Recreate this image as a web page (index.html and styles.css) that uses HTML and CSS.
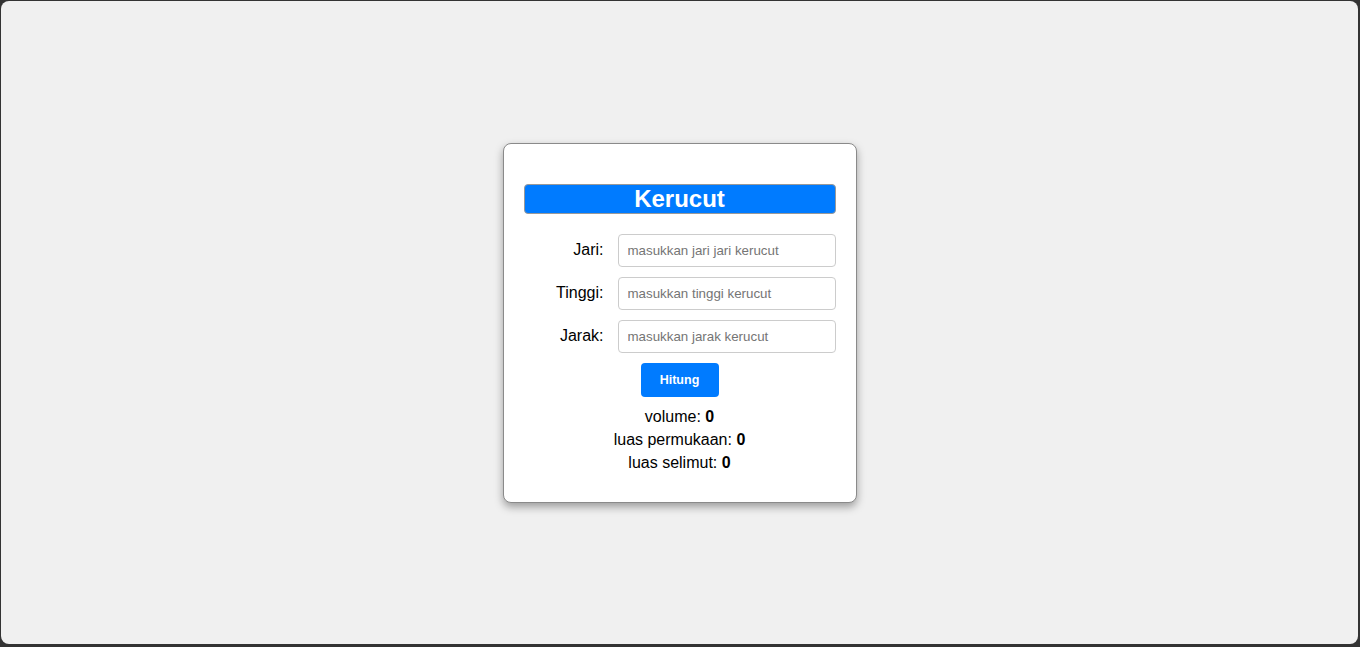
FILE: index.html
```html
<!DOCTYPE html>
<html lang="id">
<head>
<meta charset="utf-8">
<title>Kerucut</title>
<link rel="stylesheet" href="styles.css">
</head>
<body>
<div class="frame">
  <div class="card">
    <h2 class="title">Kerucut</h2>
    <div class="row">
      <label class="label" for="jari">Jari:</label>
      <input class="field" id="jari" type="text" placeholder="masukkan jari jari kerucut">
    </div>
    <div class="row">
      <label class="label" for="tinggi">Tinggi:</label>
      <input class="field" id="tinggi" type="text" placeholder="masukkan tinggi kerucut">
    </div>
    <div class="row">
      <label class="label" for="jarak">Jarak:</label>
      <input class="field" id="jarak" type="text" placeholder="masukkan jarak kerucut">
    </div>
    <div class="actions">
      <button class="btn" type="button">Hitung</button>
    </div>
    <div class="results">
      <p class="result">volume: <b>0</b></p>
      <p class="result">luas permukaan: <b>0</b></p>
      <p class="result">luas selimut: <b>0</b></p>
    </div>
  </div>
</div>
</body>
</html>
```
FILE: styles.css
```css
html, body {
  margin: 0;
  padding: 0;
  height: 100%;
}
body {
  background: #333333;
  font-family: "Liberation Sans", Arial, sans-serif;
}
.frame {
  box-sizing: border-box;
  height: calc(100% - 4px);
  margin: 1px 2px 3px 1px;
  background: #f0f0f0;
  border-radius: 8px;
  display: flex;
  align-items: center;
  justify-content: center;
}
.card {
  width: 312px;
  padding: 20px;
  background: #ffffff;
  border: 1px solid #8a8a8a;
  border-radius: 8px;
  box-shadow: 0 4px 8px rgba(0, 0, 0, 0.35);
}
.title {
  margin: 20px 0 20px;
  font-size: 24px;
  font-weight: bold;
  line-height: 28px;
  color: #ffffff;
  text-align: center;
  background: #007bff;
  border: 1px solid #999999;
  border-radius: 4px;
}
.row {
  display: grid;
  grid-template-columns: 80px 1fr;
  column-gap: 14px;
  align-items: center;
  margin-bottom: 10px;
}
.label {
  text-align: right;
  font-size: 16px;
  color: #000000;
}
.field {
  box-sizing: border-box;
  width: 100%;
  height: 33px;
  padding: 8px 8px 8px 9px;
  font-family: "Liberation Sans", Arial, sans-serif;
  font-size: 13.333px;
  border: 1px solid #cccccc;
  border-radius: 4px;
  background: #ffffff;
}
.field::placeholder {
  color: #757575;
}
.actions {
  display: flex;
  justify-content: center;
}
.btn {
  height: 34px;
  width: 78px;
  padding: 0;
  font-family: "Liberation Sans", Arial, sans-serif;
  font-size: 12.5px;
  font-weight: bold;
  color: #ffffff;
  background: #007bff;
  border: none;
  border-radius: 4px;
}
.results {
  padding: 6px 0 5px;
  text-align: center;
}
.result {
  margin: 5px 0;
  font-size: 16px;
  color: #000000;
}
```
